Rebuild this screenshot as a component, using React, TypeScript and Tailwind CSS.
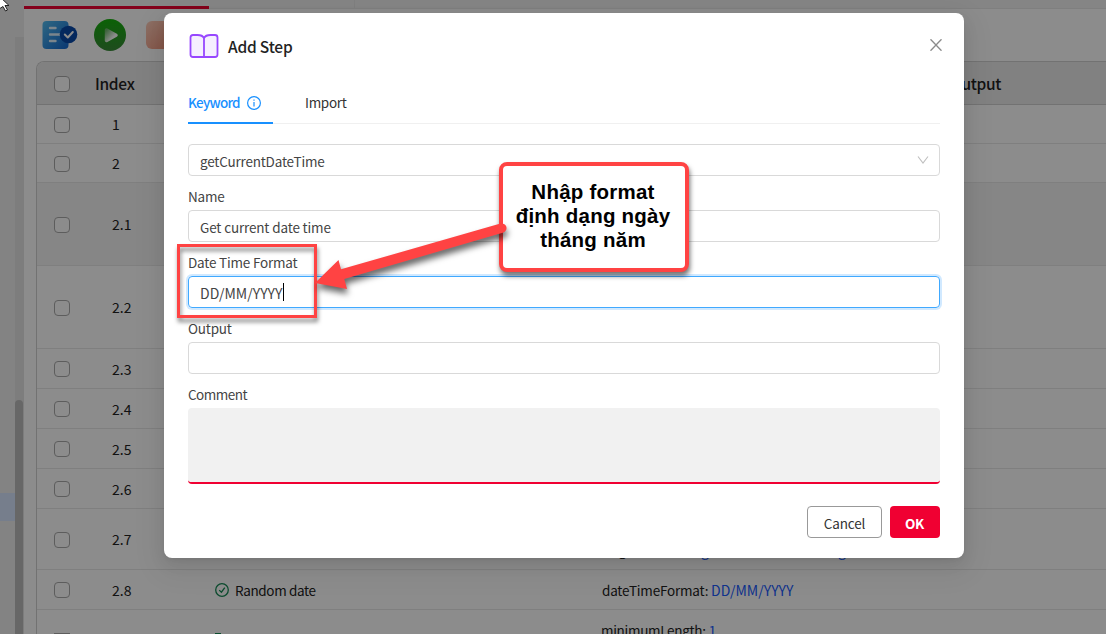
import React from "react";

const rows = [
  { index: "1", h: "h-[39px]", tint: false },
  { index: "2", h: "h-[39px]", tint: false },
  { index: "2.1", h: "h-[83px]", tint: true },
  { index: "2.2", h: "h-[83px]", tint: false },
  { index: "2.3", h: "h-[40px]", tint: false },
  { index: "2.4", h: "h-[40px]", tint: false },
  { index: "2.5", h: "h-[40px]", tint: false },
  { index: "2.6", h: "h-[40px]", tint: false },
  { index: "2.7", h: "h-[61px]", tint: false, params: [["length", "1"], ["original", "String", "String"]] },
  { index: "2.8", h: "h-[40px]", tint: false, name: "Random date", params: [["dateTimeFormat", "DD/MM/YYYY"]] },
];

function Checkbox() {
  return <span className="block size-4 shrink-0 rounded-[4px] border border-[#a9a9a9] bg-white" />;
}

function CheckCircle() {
  return (
    <svg width="14" height="14" viewBox="0 0 14 14" fill="none" stroke="#178a55" strokeWidth="1.3" className="shrink-0">
      <circle cx="7" cy="7" r="6.3" />
      <path d="M4.2 7.1 6.4 9.2 9.8 4.6" />
    </svg>
  );
}

function Toolbar() {
  return (
    <div className="flex h-[52px] shrink-0 pl-[18px] pt-[10px]">
      <svg width="36" height="32" viewBox="0 0 36 32" className="shrink-0">
        <defs>
          <linearGradient id="doc" x1="0" y1="0" x2="1" y2="1">
            <stop offset="0" stopColor="#54bdf0" />
            <stop offset="1" stopColor="#1266cf" />
          </linearGradient>
        </defs>
        <rect x="0.5" y="2" width="26" height="28" rx="4" fill="url(#doc)" />
        <g stroke="#e0f3ff" strokeWidth="2.4" strokeLinecap="round">
          <path d="M8 9h5.500M8 15.500h10M8 22h5.500" />
        </g>
        <circle cx="26.500" cy="15.500" r="8.800" fill="#094aaa" />
        <path d="m22.800 15.500 3 3 5-5.500" fill="none" stroke="#fff" strokeWidth="2" strokeLinecap="round" strokeLinejoin="round" />
      </svg>
      <svg width="32" height="32" viewBox="0 0 32 32" className="ml-4 shrink-0">
        <defs>
          <linearGradient id="play" x1="0" y1="0" x2="0" y2="1">
            <stop offset="0" stopColor="#16b20c" />
            <stop offset="1" stopColor="#398a38" />
          </linearGradient>
          <linearGradient id="tri" x1="0" y1="0" x2="1" y2="1">
            <stop offset="0" stopColor="#6fb56c" />
            <stop offset="0.7" stopColor="#fff" />
          </linearGradient>
        </defs>
        <circle cx="16" cy="16" r="16" fill="url(#play)" />
        <path d="M12.500 11v10.500l9.500-5.250Z" fill="url(#tri)" stroke="url(#tri)" strokeWidth="3.500" strokeLinejoin="round" />
      </svg>
      <span className="ml-5 mt-[2px] block h-7 w-7 rounded-[6px] bg-gradient-to-br from-[#ffcdbb] to-[#ed8f75]" />
    </div>
  );
}

function Workspace() {
  return (
    <div className="flex h-full w-full bg-white">
      <aside className="flex w-6 shrink-0 bg-[#efefef]">
        <div className="flex w-[15px] flex-col pt-[493px]">
          <div className="h-7 bg-[#d7e5ff]" />
        </div>
        <div className="mt-[37px] w-[9px] bg-[#e4e4e4] pt-[363px]">
          <div className="h-full w-2 rounded-t-full bg-[#bcbcbc]" />
        </div>
      </aside>
      <div className="flex min-w-0 flex-1 flex-col">
        <div className="flex h-[9px] shrink-0 border-b border-[#e7e7e7] bg-[#f3f3f3]">
          <div className="h-[9px] w-[185px] border-b-3 border-[#f00032] bg-[#f5f5f5]" />
          <div className="h-2 w-[146px] border-r border-[#e7e7e7]" />
        </div>
        <Toolbar />
        <div className="ml-3 flex flex-1 flex-col rounded-tl-[8px] border-l border-t border-[#d0d0d0]">
          <div className="flex h-[43px] shrink-0 items-center rounded-tl-[7px] border-b border-[#d0d0d0] bg-[#ebebeb] pl-[17px] pt-[2px] text-[15.5px] font-medium tracking-[-0.3px]">
            <Checkbox />
            <span className="-mt-[2px] ml-[25px] w-[855px]">Index</span>
            <span className="-mt-[2px]">Output</span>
          </div>
          {rows.map((r, i) => (
            <div key={i} className={`flex shrink-0 items-center border-b border-[#e8e8e8] pl-[17px] pt-px ${r.h} ${r.tint ? "bg-[#f5f5f5]" : ""}`}>
              <Checkbox />
              <span className="-mt-px ml-[42px] w-[103px] shrink-0">{r.index}</span>
              <span className="flex w-[387px] shrink-0 items-center gap-[6px]">
                {r.name && <CheckCircle />}
                <span className="text-[13.5px] tracking-[-0.35px]">{r.name}</span>
              </span>
              <span className="flex flex-col">
                {r.params?.map(([k, v, extra]) => (
                  <span key={k} className="flex leading-[21px]">
                    <span className={`whitespace-pre text-[13.5px] tracking-[-0.2px] ${extra ? "w-[68px]" : ""}`}>{k}: </span>
                    <span className={`text-[#205cff] ${extra ? "w-[137px]" : ""}`}>{v}</span>
                    {extra && <span className="text-[#205cff]">{extra}</span>}
                  </span>
                ))}
              </span>
            </div>
          ))}
          <div className="flex pl-[17px]">
            <div className="mt-[23px] h-px w-4 shrink-0 bg-[#a9a9a9]" />
            <div className="ml-[145px] mt-[23px] h-px w-[6px] shrink-0 bg-[#178a55]" />
            <div className="ml-[380px] mt-[10px] flex leading-5">
              <span className="whitespace-pre text-[13.5px] tracking-[-0.3px]">minimumLength: </span>
              <span className="text-[#205cff]">1</span>
            </div>
          </div>
        </div>
      </div>
    </div>
  );
}

function Field({ label, value, focused }: { label: string; value?: string; focused?: boolean }) {
  return (
    <div>
      <div className="flex h-[34px] items-center pt-[5px] text-[13.5px] tracking-[-0.2px] text-[#444]">{label}</div>
      <div
        className={`flex h-8 items-center rounded-[4px] border pl-[11px] pt-[2px] text-[#444] ${
          focused ? "border-[#40a9ff] shadow-[0_0_0_2px_rgba(24,144,255,0.2)]" : "border-[#d9d9d9] text-[13.5px] tracking-[-0.15px]"
        }`}
      >
        {value}
        {focused && <span className="-mt-[2px] ml-px h-[18px] w-px bg-black" />}
      </div>
    </div>
  );
}

function AddStepDialog() {
  return (
    <section className="mt-[13px] h-[545px] w-[800px] rounded-[8px] bg-white px-6 shadow-[0_3px_6px_-4px_rgba(0,0,0,0.12),0_6px_16px_0_rgba(0,0,0,0.08),0_9px_28px_8px_rgba(0,0,0,0.05)]">
      <header className="flex h-[66px] items-center pb-[2px]">
        <svg width="32" height="26" viewBox="0 0 32 26" fill="#f5efff" stroke="#9747ff" strokeWidth="1.8" strokeLinejoin="round" className="mt-px">
          <path d="M16 5C15 3 12.5 2 9.5 2H5Q2.5 2 2.5 4.5V21.5Q2.5 24 5 24H16ZM16 5C17 3 19.5 2 22.5 2H27Q29.5 2 29.5 4.5V21.5Q29.5 24 27 24H16Z" />
        </svg>
        <h1 className="ml-2 mt-px text-[15.5px] font-medium tracking-[-0.2px] text-[#222]">Add Step</h1>
        <svg width="12" height="12" viewBox="0 0 12 12" className="ml-auto mr-[-2px]" stroke="#8c8c8c" strokeWidth="1.4">
          <path d="m.5.3 11 11.4M11.5.3l-11 11.4" />
        </svg>
      </header>
      <nav className="flex h-[45px] border-b border-[#f0f0f0]">
        <div className="flex h-[45px] w-[85px] items-center border-b-2 border-[#1890ff] pt-[3px] text-[#1890ff]">
          <span className="w-[51px] text-[13.5px] font-medium tracking-[-0.75px]">Keyword</span>
          <svg width="14" height="14" viewBox="0 0 14 14" fill="none" stroke="#1890ff" className="ml-2 mt-px">
            <circle cx="7" cy="7" r="6.4" strokeWidth="1.2" />
            <path d="M7 6v4.5M7 3.5v1.3" strokeWidth="1.2" />
          </svg>
        </div>
        <div className="ml-8 flex h-[43px] items-center pt-[3px] text-[13.5px] tracking-[-0.3px] text-[#333]">Import</div>
      </nav>
      <div className="mt-5 flex h-8 items-center rounded-[4px] border border-[#d9d9d9] pl-[11px] pr-[10px] text-[#444]">
        <span className="mt-[2px] text-[13.5px] tracking-[-0.2px]">getCurrentDateTime</span>
        <svg width="12" height="10" viewBox="0 0 12 10" fill="none" stroke="#bfbfbf" strokeWidth="1.1" className="ml-auto">
          <path d="m1 1.5 5 6.5 5-6.5" />
        </svg>
      </div>
      <Field label="Name" value="Get current date time" />
      <Field label="Date Time Format" value="DD/MM/YYYY" focused />
      <Field label="Output" />
      <div className="flex h-[34px] items-center pt-[5px] text-[13.5px] tracking-[-0.5px] text-[#444]">Comment</div>
      <div className="h-[76px] rounded-[4px] border-b-2 border-[#f00032] bg-[#f1f1f1]" />
      <footer className="mt-[22px] flex justify-end gap-2">
        <button className="h-8 w-[75px] rounded-[4px] border border-[#999] pt-px text-[13.5px] tracking-[-0.1px] text-[#333]">Cancel</button>
        <button className="h-8 w-[50px] rounded-[4px] bg-[#f00032] pt-px pr-px text-[13.5px] font-bold tracking-[-0.3px] text-white">OK</button>
      </footer>
    </section>
  );
}

function Annotations() {
  return (
    <div className="absolute inset-0">
      <div className="absolute left-[177px] top-[244px] h-[74px] w-[140px] border-3 border-[#ff4343] drop-shadow-[1px_4px_2px_rgba(0,0,0,0.5)]" />
      <div className="absolute left-[499px] top-[162px] flex h-[110px] w-[190px] justify-center rounded-[8px] border-4 border-[#ff4343] bg-white pr-[2px] pt-[14px] text-center font-['Liberation_Sans',sans-serif] text-[20.5px] font-bold leading-6 tracking-[0.23px] text-black shadow-[1px_4px_5px_rgba(0,0,0,0.55)]">
        <p>
          Nhập format
          <br />
          định dạng ngày
          <br />
          tháng năm
        </p>
      </div>
      <svg width="1106" height="634" viewBox="0 0 1106 634" className="absolute inset-0 drop-shadow-[1px_5px_3px_rgba(0,0,0,0.6)]" fill="#ff4343">
        <path d="M315 283 338.5 260 341 269.3 500.5 223.6A4.7 4.7 0 0 1 503.5 232.5L344.3 279 347 289Z" />
      </svg>
      <svg width="12" height="14" viewBox="0 0 12 14" className="absolute left-0 top-0" fill="#fff" stroke="#222" strokeWidth="1">
        <path d="M-2-5 9 5.5H5L7.5 10 5.5 11 3 6.5-1 9Z" />
      </svg>
    </div>
  );
}

export default function App() {
  return (
    <main className="relative h-[634px] w-[1106px] overflow-hidden font-['Noto_Sans_CJK_SC',sans-serif] text-[14px] leading-5 text-[#222]">
      <Workspace />
      <div className="absolute inset-0 flex items-start bg-black/45 pl-[164px]">
        <AddStepDialog />
      </div>
      <Annotations />
    </main>
  );
}
